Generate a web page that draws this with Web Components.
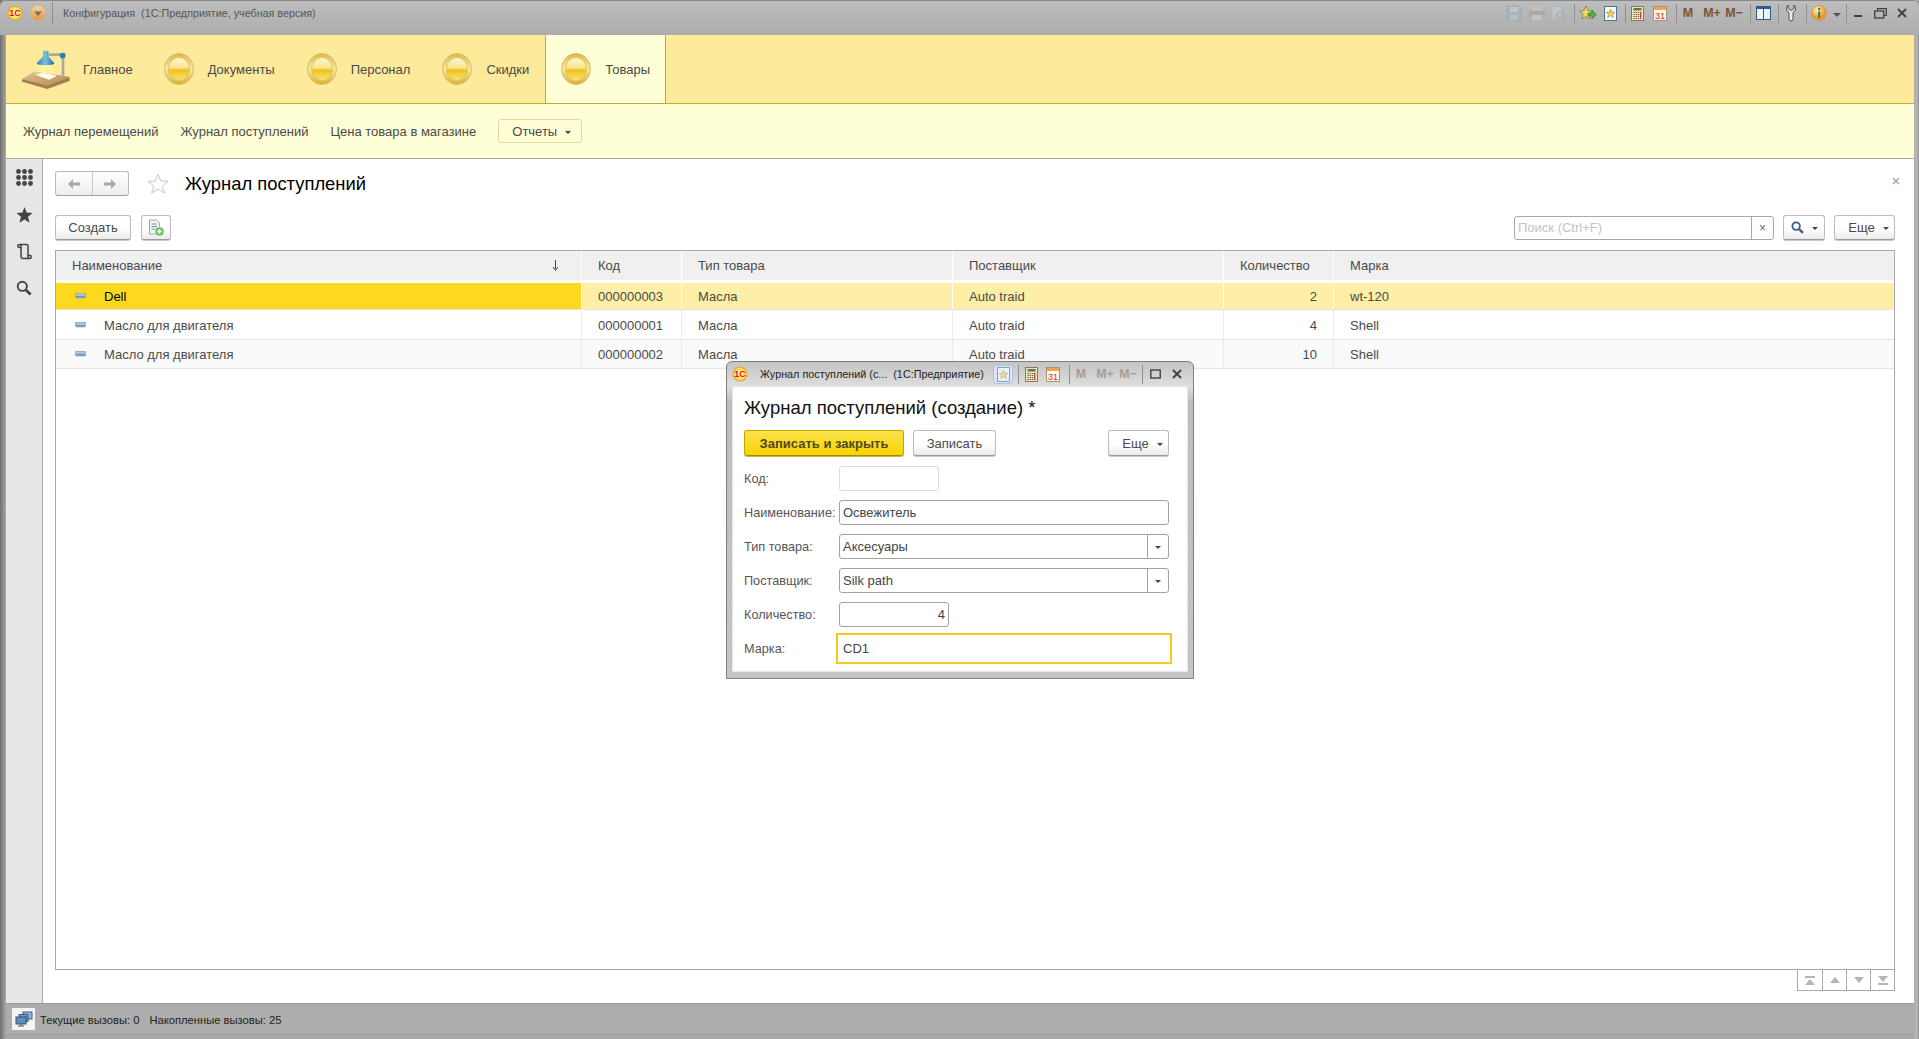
<!DOCTYPE html>
<html lang="ru">
<head>
<meta charset="utf-8">
<title>Журнал поступлений</title>
<style>
  html, body { margin: 0; height: 100%; overflow: hidden; }
  body { font-family: "Liberation Sans", Arial, sans-serif; font-size: 13px; color: #4a4a4a; }
</style>
</head>
<body>
<ic-app>
  <ic-titlebar>Конфигурация&nbsp; (1С:Предприятие, учебная версия)</ic-titlebar>
  <ic-sections>
    <ic-section icon="lamp" style="padding:0 15px 0 14px;gap:10px">Главное</ic-section>
    <ic-section icon="ball">Документы</ic-section>
    <ic-section icon="ball">Персонал</ic-section>
    <ic-section icon="ball">Скидки</ic-section>
    <ic-section icon="ball" active>Товары</ic-section>
  </ic-sections>
  <ic-subnav>
    <span>Журнал перемещений</span>
    <span>Журнал поступлений</span>
    <span>Цена товара в магазине</span>
    <ic-button tone="soft" menu style="width:84px">Отчеты</ic-button>
  </ic-subnav>
  <ic-workspace>
    <ic-sidebar></ic-sidebar>
    <ic-journal></ic-journal>
  </ic-workspace>
  <ic-status></ic-status>
  <ic-dialog></ic-dialog>
</ic-app>

<script>
// small drawings, coordinates follow the 3x crops of the reference
const ICONS = {
  lamp: `<svg width="53" height="43" viewBox="60 140 160 130">
    <defs>
      <linearGradient id="b" x1="0" x2="1" y1="0" y2="1"><stop offset="0" stop-color="#e2bd8c"/><stop offset="1" stop-color="#b58a5c"/></linearGradient>
      <linearGradient id="l" x1="0" x2="0" y1="0" y2="1"><stop offset="0" stop-color="#fff6a0"/><stop offset="1" stop-color="#fff6a0" stop-opacity=".2"/></linearGradient>
      <linearGradient id="s" x1="0" x2="1" y1="0" y2="0"><stop offset="0" stop-color="#2f80b0"/><stop offset=".5" stop-color="#7cc0de"/><stop offset="1" stop-color="#1f6a9c"/></linearGradient>
    </defs>
    <path d="M66 236 105 212 210 228 210 240 142 264 66 242Z" fill="#a87c52"/>
    <path d="M66 234 105 212 210 228 142 254Z" fill="url(#b)"/>
    <path d="M108 222 128 214 172 224 148 236Z" fill="#fffdf0"/>
    <path d="M122 188 152 188 170 222 100 222Z" fill="url(#l)"/>
    <path d="M146 160H190V224" fill="none" stroke="#a9a9a0" stroke-width="8"/>
    <path d="M130 148H146V166L164 186Q164 192 137 192 110 192 110 186L130 166Z" fill="url(#s)"/>
    <circle cx="189" cy="163" r="9" fill="#2f80b0"/>
  </svg>`,
  ball: `<svg width="30" height="32" viewBox="0 0 30 32">
    <defs>
      <linearGradient id="o" x1="0" x2="0" y1="0" y2="1"><stop offset="0" stop-color="#dcb84a"/><stop offset=".5" stop-color="#f8e7a8"/><stop offset="1" stop-color="#d9b035"/></linearGradient>
      <linearGradient id="i" x1="0" x2="0" y1="0" y2="1"><stop offset="0" stop-color="#fdf8d8"/><stop offset=".45" stop-color="#f8e590"/><stop offset=".55" stop-color="#efc21a"/><stop offset="1" stop-color="#f9e47e"/></linearGradient>
    </defs>
    <ellipse cx="15" cy="16" rx="14.5" ry="15.5" fill="url(#o)" stroke="#d8bd66"/>
    <ellipse cx="15" cy="16" rx="10.5" ry="11.5" fill="url(#i)" stroke="#e3c145" stroke-width=".8"/>
  </svg>`,
  logo: `<svg width="16" height="16" viewBox="0 0 16 16">
    <defs><radialGradient id="g"><stop offset="0" stop-color="#fff9c8"/><stop offset=".75" stop-color="#fcdc50"/><stop offset="1" stop-color="#e98f25"/></radialGradient></defs>
    <circle cx="8" cy="8" r="7.5" fill="url(#g)"/>
    <text x="8" y="11.2" text-anchor="middle" font-family="Liberation Sans" font-weight="700" font-size="9" fill="#d8191c">1С</text>
  </svg>`,
  down: `<svg width="16" height="16" viewBox="0 0 16 16">
    <defs><linearGradient id="g" x1="0" x2="0" y1="0" y2="1"><stop offset="0" stop-color="#f5d6a6"/><stop offset="1" stop-color="#e6943c"/></linearGradient></defs>
    <circle cx="8" cy="8" r="7.5" fill="url(#g)" stroke="#e0b27a" stroke-width=".5"/>
    <path d="M4 6.5H12L8 11Z" fill="#6f6f6f"/>
  </svg>`,
  save: `<svg width="16" height="16" viewBox="0 0 16 16"><path d="M1 1H13L15 3V15H1Z" fill="#9fb3c0" stroke="#8ea6b6"/><rect x="4" y="2" width="8" height="5" fill="#c7d3da"/><rect x="4" y="10" width="8" height="5" fill="#b9c7d0"/></svg>`,
  print: `<svg width="18" height="16" viewBox="0 0 18 16"><rect x="4" y="1" width="10" height="5" fill="#c9c3bd"/><rect x="1" y="6" width="16" height="6" rx="1" fill="#a89f99"/><rect x="4" y="10" width="10" height="5" fill="#d0cbc6"/></svg>`,
  preview: `<svg width="16" height="16" viewBox="0 0 16 16"><path d="M2 1H10L12 3V14H2Z" fill="#c3cdd4" stroke="#a7b4bc"/><circle cx="10" cy="10" r="3" fill="#c5ccd0" stroke="#a09a94" stroke-width="1.2"/><path d="M12 12 15 15" stroke="#b89c88" stroke-width="1.5"/></svg>`,
  stargo: `<svg width="18" height="16" viewBox="0 0 18 16"><path d="M7 1 9 5.5 13.5 6 10 9 11 14 7 11.5 3 14 4 9 .5 6 5 5.5Z" fill="#f5d768" stroke="#6f6a3a" stroke-width=".7"/><path d="M9 8H13V5L17.5 9.5 13 14V11H9Z" fill="#55b03c" stroke="#2e7a25" stroke-width=".6"/></svg>`,
  stardoc: `<svg width="13" height="15" viewBox="0 0 13 15"><rect x=".5" y=".5" width="12" height="14" fill="#f6f8fc" stroke="#4e6f98"/><path d="M6.5 3 7.8 6 11 6.3 8.6 8.3 9.3 11.5 6.5 9.8 3.7 11.5 4.4 8.3 2 6.3 5.2 6Z" fill="#f0cf5c" stroke="#8a7a3a" stroke-width=".5"/></svg>`,
  calc: `<svg width="13" height="15" viewBox="0 0 13 15"><rect x=".5" y=".5" width="12" height="14" fill="#f5e2b6" stroke="#8d7850"/><rect x="2.5" y="2" width="8" height="2.5" fill="#58795a"/><path d="M2.5 6.5H10.5M2.5 8.5H10.5M2.5 10.5H10.5M2.5 12.5H10.5" stroke="#5e5a4e" stroke-dasharray="1.3 .9"/><path d="M9.5 6V13" stroke="#c9402e"/></svg>`,
  cal: `<svg width="14" height="15" viewBox="0 0 14 15"><rect x=".5" y=".5" width="13" height="14" fill="#fdf7ea" stroke="#a89470"/><rect x="1" y="1" width="12" height="3" fill="#eda45a"/><text x="7" y="13" text-anchor="middle" font-family="Liberation Sans" font-size="9" fill="#dd2b1c">31</text></svg>`,
  panel: `<svg width="15" height="14" viewBox="0 0 15 14"><rect x=".5" y=".5" width="14" height="13" fill="#eef3f8" stroke="#2f5c86"/><rect x="1" y="1" width="13" height="2" fill="#2f5c86"/><path d="M7.5 3V13" stroke="#2f5c86"/></svg>`,
  wrench: `<svg width="10" height="18" viewBox="0 0 10 18"><path d="M2 1V4.5L5 6.5 8 4.5V1Q9.5 3 9.5 5 9.5 7.5 7 8.5V14.5Q7 17 5 17T3 14.5V8.5Q.5 7.5 .5 5 .5 3 2 1Z" fill="#e8e8e8" stroke="#4f4f4f"/></svg>`,
  info: `<svg width="16" height="16" viewBox="0 0 16 16"><defs><radialGradient id="g" cx=".4" cy=".3"><stop offset="0" stop-color="#fff2c6"/><stop offset="1" stop-color="#eb9a31"/></radialGradient></defs><circle cx="8" cy="8" r="7.5" fill="url(#g)" stroke="#c98b3c" stroke-width=".6"/><rect x="7" y="6.5" width="2.2" height="6.5" fill="#3c8a2e"/><rect x="7" y="3" width="2.2" height="2.2" fill="#3c8a2e"/></svg>`,
  min: `<svg width="10" height="10" viewBox="0 0 10 10"><path d="M1 8H9" stroke="#3f3f3f" stroke-width="2"/></svg>`,
  restore: `<svg width="13" height="11" viewBox="0 0 13 11"><path d="M3.5 2.5V.7H12.3V7.5H10" fill="none" stroke="#3f3f3f" stroke-width="1.2"/><rect x=".7" y="3" width="9" height="7" fill="none" stroke="#3f3f3f" stroke-width="1.3"/></svg>`,
  max: `<svg width="11" height="10" viewBox="0 0 11 10"><rect x=".8" y="1" width="9.4" height="8" fill="none" stroke="#3f3f3f" stroke-width="1.4"/></svg>`,
  close: `<svg width="10" height="10" viewBox="0 0 10 10"><path d="M1 1 9 9M9 1 1 9" stroke="#444" stroke-width="2"/></svg>`,
  closethin: `<svg width="8" height="8" viewBox="0 0 8 8"><path d="M1 1 7 7M7 1 1 7" stroke="#a8a8a8" stroke-width="1.5"/></svg>`,
  grid: `<svg width="17" height="17" viewBox="0 0 17 17" fill="#444"><circle cx="2.5" cy="2.5" r="2.4"/><circle cx="8.5" cy="2.5" r="2.4"/><circle cx="14.5" cy="2.5" r="2.4"/><circle cx="2.5" cy="8.5" r="2.4"/><circle cx="8.5" cy="8.5" r="2.4"/><circle cx="14.5" cy="8.5" r="2.4"/><circle cx="2.5" cy="14.5" r="2.4"/><circle cx="8.5" cy="14.5" r="2.4"/><circle cx="14.5" cy="14.5" r="2.4"/></svg>`,
  star: `<svg width="17" height="16" viewBox="0 0 17 16"><path d="M8.5 0 10.6 5.6 16.7 6 12 9.8 13.6 15.8 8.5 12.5 3.4 15.8 5 9.8 .3 6 6.4 5.6Z" fill="#444"/></svg>`,
  scroll: `<svg width="15" height="17" viewBox="0 0 15 17" fill="none" stroke="#444" stroke-width="1.5"><path d="M3 1.5H9.5Q11 1.5 11 3V13.5Q11 15.5 13 15.5H6Q4 15.5 4 13.5V3.5Q4 1.5 2 1.5 .8 1.5 .8 3 .8 4.5 2.5 4.5H4"/><path d="M11 12.5H13.5Q14.2 12.5 14.2 14 14.2 15.5 13 15.5"/></svg>`,
  lens: `<svg width="16" height="16" viewBox="0 0 16 16" fill="none" stroke="#444"><circle cx="6.3" cy="6.3" r="4.6" stroke-width="1.9"/><path d="M10 10 14.6 14.6" stroke-width="2.8"/></svg>`,
  lensblue: `<svg width="13" height="13" viewBox="0 0 16 16" fill="none" stroke="#3b5f86"><circle cx="6.3" cy="6.3" r="4.6" stroke-width="2.2"/><path d="M10 10 14.6 14.6" stroke-width="3"/></svg>`,
  back: `<svg width="14" height="12" viewBox="0 0 14 12"><path d="M6 1 1 6 6 11V7.5H13V4.5H6Z" fill="#a8a8a8"/></svg>`,
  fwd: `<svg width="14" height="12" viewBox="0 0 14 12"><path d="M8 1 13 6 8 11V7.5H1V4.5H8Z" fill="#a8a8a8"/></svg>`,
  starline: `<svg width="22" height="21" viewBox="0 0 22 21"><path d="M11 1 13.8 8 21 8.3 15.4 13 17.3 20 11 16 4.7 20 6.6 13 1 8.3 8.2 8Z" fill="#fff" stroke="#c8c8c8"/></svg>`,
  newdoc: `<svg width="17" height="18" viewBox="0 0 17 18"><path d="M1.5 1H8.5L11.5 4V15H1.5Z" fill="#f4f7fa" stroke="#9aa7b0"/><path d="M3.5 5H9M3.5 7.5H9M3.5 10H7" stroke="#6f90ad"/><circle cx="11.5" cy="12.5" r="4.5" fill="#6cb85c" stroke="#cfe6c8"/><path d="M9 12.5H14M11.5 10V15" stroke="#fff" stroke-width="1.6"/></svg>`,
  dash: `<svg width="11" height="6" viewBox="0 0 11 6"><rect width="11" height="5" rx="2" fill="#a9c4dc" stroke="#6f8ba6" stroke-width=".6"/><rect x="1" y="3" width="9" height="1.5" fill="#7a97b2"/></svg>`,
  sort: `<svg width="7" height="11" viewBox="0 0 7 11"><path d="M3.5 0V9M1 7 3.5 10.5 6 7" fill="none" stroke="#444"/></svg>`,
  net: `<svg width="18" height="16" viewBox="0 0 18 16"><rect x="8" y="1" width="9" height="7" fill="#8fb6d8" stroke="#3c5f80"/><rect x="4" y="3.5" width="9" height="7" fill="#6f9cc4" stroke="#3c5f80"/><rect x="1" y="6" width="10" height="7" fill="#5c90bf" stroke="#2f4f6e"/><path d="M6 13V15M3 15H9" stroke="#555"/></svg>`
};

// renders one of the drawings above; opacity through the "dim" attribute
class IcIcon extends HTMLElement {
  connectedCallback() {
    this.attachShadow({ mode: 'open' });
    this.shadowRoot.innerHTML = `
      <style>
        :host { display: inline-flex; align-items: center; justify-content: center; line-height: 0; }
        :host([dim]) { opacity: .6; }
      </style>
      ${ICONS[this.getAttribute('name')] || ''}`;
  }
}
customElements.define('ic-icon', IcIcon);

class IcApp extends HTMLElement {
  connectedCallback() {
    this.attachShadow({ mode: 'open' });
    this.shadowRoot.innerHTML = `
      <style>
        :host {
          display: flex;
          flex-direction: column;
          position: relative;
          box-sizing: border-box;
          height: 1039px;
          padding: 0 5px 4px 6px;
          background: linear-gradient(90deg, #6f6f6f 0, #8c8c8c 3px, #a8a8a8 6px, #a8a8a8 calc(100% - 6px), #b9b9b9 calc(100% - 2px), #8d8d8d 100%);
        }
      </style>
      <slot></slot>`;
  }
}
customElements.define('ic-app', IcApp);

// [width, name, dimmed] or [sep, left gap, right gap]
const TOOLS = [
  [23, 'save', 1], [24, 'print', 1], [18, 'preview', 1], ['sep', 7, 2],
  [22, 'stargo'], [22, 'stardoc'], ['sep', 4, 0],
  [22, 'calc'], [24, 'cal'], ['sep', 4, 0],
  [22, 'M'], [26, 'M+'], [18, 'M-'], ['sep', 7, 0],
  [24, 'panel'], ['sep', 3, 0],
  [24, 'wrench'], ['sep', 3, 0],
  [24, 'info'], [12, 'caret'], ['sep', 3, 0],
  [22, 'min'], [22, 'restore'], [22, 'close']
];

function toolHtml(list) {
  return list.map(t => {
    if (t[0] === 'sep') return `<i class="sep" style="margin:0 ${t[2]}px 0 ${t[1]}px"></i>`;
    const [w, name, dim] = t;
    let inner;
    if (name[0] === 'M') inner = `<b class="${dim ? 'faded' : ''}">${name.replace('-', '−')}</b>`;
    else if (name === 'caret') inner = '<u class="caret"></u>';
    else inner = `<ic-icon name="${name}" ${dim ? 'dim' : ''}></ic-icon>`;
    return `<span class="tool" style="width:${w}px">${inner}</span>`;
  }).join('');
}

const TOOL_CSS = `
  .tool { display: flex; align-items: center; justify-content: center; flex: none; }
  .tool b { font: 700 12.5px "Liberation Sans", Arial, sans-serif; color: #7b5433; white-space: nowrap; }
  .tool b.faded { color: #a99c92; }
  .sep { display: block; flex: none; width: 1px; height: 19px; background: #8f8f8f; }
  .caret { width: 0; height: 0; border: 4px solid transparent; border-top-color: #555; border-bottom: 0; margin-top: 4px; }
`;

class IcTitlebar extends HTMLElement {
  connectedCallback() {
    this.attachShadow({ mode: 'open' });
    this.shadowRoot.innerHTML = `
      <style>
        :host {
          display: flex;
          align-items: flex-start;
          height: 35px;
          margin: 0 -5px 0 -6px;
          padding: 4px 5px 0 7px;
          box-sizing: border-box;
          background: linear-gradient(#bdbdbd, #acacac);
          border-top: 1px solid #8a8a8a;
          border-radius: 6px 6px 0 0;
          font-size: 10.75px;
          color: #555;
        }
        .left { display: flex; align-items: center; height: 16px; }
        .vline { width: 1px; height: 22px; margin: 0 10px 0 6px; background: #8f8f8f; }
        .name { white-space: nowrap; }
        .tools { display: flex; align-items: center; margin-left: auto; height: 16px; margin-right: 1px; }
        ${TOOL_CSS}
      </style>
      <div class="left">
        <ic-icon name="logo"></ic-icon>
        <ic-icon name="down" style="margin-left:7px"></ic-icon>
        <i class="vline"></i>
        <span class="name"><slot></slot></span>
      </div>
      <div class="tools">${toolHtml(TOOLS)}</div>`;
  }
}
customElements.define('ic-titlebar', IcTitlebar);

class IcSections extends HTMLElement {
  connectedCallback() {
    this.attachShadow({ mode: 'open' });
    this.shadowRoot.innerHTML = `
      <style>
        :host {
          display: flex;
          height: 69px;
          box-sizing: border-box;
          background: #fdeb9b;
          border-bottom: 1px solid #c4ab2e;
        }
      </style>
      <slot></slot>`;
  }
}
customElements.define('ic-sections', IcSections);

class IcSection extends HTMLElement {
  connectedCallback() {
    this.attachShadow({ mode: 'open' });
    const icon = this.getAttribute('icon');
    this.shadowRoot.innerHTML = `
      <style>
        :host {
          display: flex;
          align-items: center;
          gap: 14px;
          padding: 0 16px;
          white-space: nowrap;
          color: #4a4a4a;
        }
        :host([active]) {
          background: #feffd6;
          padding: 0 15px;
          border-left: 1px solid #c4ab2e;
          border-right: 1px solid #c4ab2e;
        }
      </style>
      <ic-icon name="${icon}"></ic-icon>
      <slot></slot>`;
  }
}
customElements.define('ic-section', IcSection);

class IcSubnav extends HTMLElement {
  connectedCallback() {
    this.attachShadow({ mode: 'open' });
    this.shadowRoot.innerHTML = `
      <style>
        :host {
          display: flex;
          align-items: center;
          gap: 22px;
          height: 55px;
          padding: 0 17px;
          box-sizing: border-box;
          background: #feffd6;
          border-bottom: 1px solid #a9a9a9;
          white-space: nowrap;
          color: #4a4a4a;
        }
      </style>
      <slot></slot>`;
  }
}
customElements.define('ic-subnav', IcSubnav);

class IcButton extends HTMLElement {
  connectedCallback() {
    this.attachShadow({ mode: 'open' });
    const menu = this.hasAttribute('menu');
    this.shadowRoot.innerHTML = `
      <style>
        :host {
          display: inline-flex;
          align-items: center;
          justify-content: center;
          flex: none;
          box-sizing: border-box;
          height: 26px;
          gap: 8px;
          padding: 0 1px;
          border: 1px solid #bcbcbc;
          border-bottom-color: #9a9a9a;
          border-radius: 3px;
          background: linear-gradient(#fff 55%, #ececec);
          box-shadow: 0 1px 0 #c9c9c9;
          color: #4a4a4a;
          white-space: nowrap;
        }
        :host([menu]) { padding-left: 9px; }
        :host([tone="soft"]) {
          height: 24px;
          padding-left: 4px;
          background: transparent;
          border-color: #e2d99a;
          box-shadow: none;
        }
        :host([tone="primary"]) {
          background: linear-gradient(#fce24a, #f8d400);
          border-color: #c2a300;
          border-bottom-color: #a68b00;
          box-shadow: 0 1px 0 #c9b55a;
          font-weight: 700;
          color: #4f4a1c;
        }
        .caret { width: 0; height: 0; border: 3px solid transparent; border-top-color: #444; border-bottom: 0; margin-top: 2px; }
      </style>
      <slot></slot>${menu ? '<span class="caret"></span>' : ''}`;
  }
}
customElements.define('ic-button', IcButton);

class IcSidebar extends HTMLElement {
  connectedCallback() {
    this.attachShadow({ mode: 'open' });
    this.shadowRoot.innerHTML = `
      <style>
        :host {
          display: flex;
          flex-direction: column;
          flex: none;
          width: 37px;
          box-sizing: border-box;
          background: #e7e7e7;
          border-right: 1px solid #a9a9a9;
        }
        span { display: flex; align-items: center; justify-content: center; height: 37px; }
        span:last-child { height: 36px; }
      </style>
      <span><ic-icon name="grid"></ic-icon></span>
      <span><ic-icon name="star"></ic-icon></span>
      <span><ic-icon name="scroll"></ic-icon></span>
      <span><ic-icon name="lens"></ic-icon></span>`;
  }
}
customElements.define('ic-sidebar', IcSidebar);

class IcWorkspace extends HTMLElement {
  connectedCallback() {
    this.attachShadow({ mode: 'open' });
    this.shadowRoot.innerHTML = `
      <style>
        :host { display: flex; flex: 1; min-height: 0; background: #fff; }
      </style>
      <slot></slot>`;
  }
}
customElements.define('ic-workspace', IcWorkspace);

class IcJournal extends HTMLElement {
  connectedCallback() {
    this.attachShadow({ mode: 'open' });
    this.shadowRoot.innerHTML = `
      <style>
        :host {
          display: flex;
          flex-direction: column;
          flex: 1;
          min-width: 0;
          padding: 12px 19px 12px 12px;
          box-sizing: border-box;
        }
        .head { display: flex; align-items: center; height: 25px; }
        .nav {
          display: flex;
          width: 74px;
          height: 25px;
          box-sizing: border-box;
          border: 1px solid #bcbcbc;
          border-bottom-color: #a0a0a0;
          border-radius: 3px;
          background: linear-gradient(#fff, #eee);
        }
        .nav span { flex: 1; display: flex; align-items: center; justify-content: center; }
        .nav span + span { border-left: 1px solid #c8c8c8; }
        h1 { margin: 1px 0 0 16px; font: 400 18.4px "Liberation Sans", Arial, sans-serif; color: #000; white-space: nowrap; }
        .x { margin-left: auto; margin-top: -5px; margin-right: -5px; line-height: 0; }
        .bar { display: flex; align-items: center; height: 25px; margin: 19px 0 10px; }
        .search {
          display: flex;
          width: 260px;
          height: 24px;
          margin-left: auto;
          box-sizing: border-box;
          border: 1px solid #a8a8a8;
          border-radius: 3px;
          color: #c4c4c4;
          line-height: 22px;
          padding-left: 3px;
        }
        .search span:first-child { flex: 1; }
        .search span:last-child {
          width: 21px;
          border-left: 1px solid #a8a8a8;
          text-align: center;
          color: #666;
          font-size: 12px;
        }
      </style>
      <div class="head">
        <div class="nav"><span><ic-icon name="back"></ic-icon></span><span><ic-icon name="fwd"></ic-icon></span></div>
        <ic-icon name="starline" style="margin-left:18px"></ic-icon>
        <h1>Журнал поступлений</h1>
        <span class="x"><ic-icon name="closethin"></ic-icon></span>
      </div>
      <div class="bar">
        <ic-button style="width:76px;height:25px">Создать</ic-button>
        <ic-button style="width:30px;height:25px;margin-left:10px"><ic-icon name="newdoc"></ic-icon></ic-button>
        <div class="search"><span>Поиск (Ctrl+F)</span><span>×</span></div>
        <ic-button menu style="width:42px;height:25px;margin-left:9px;padding-left:1px"><ic-icon name="lensblue"></ic-icon></ic-button>
        <ic-button menu style="width:61px;height:25px;margin-left:9px">Еще</ic-button>
      </div>
      <ic-table></ic-table>`;
  }
}
customElements.define('ic-journal', IcJournal);

const COLUMNS = [
  ['Наименование', 526], ['Код', 100], ['Тип товара', 271], ['Поставщик', 271], ['Количество', 110], ['Марка', 0]
];
const ROWS = [
  ['Dell', '000000003', 'Масла', 'Auto traid', '2', 'wt-120'],
  ['Масло для двигателя', '000000001', 'Масла', 'Auto traid', '4', 'Shell'],
  ['Масло для двигателя', '000000002', 'Масла', 'Auto traid', '10', 'Shell']
];

class IcTable extends HTMLElement {
  connectedCallback() {
    this.attachShadow({ mode: 'open' });
    const tracks = COLUMNS.map(c => c[1] ? c[1] + 'px' : '1fr').join(' ');
    this.shadowRoot.innerHTML = `
      <style>
        :host { display: flex; flex-direction: column; flex: 1; min-height: 0; }
        .box { flex: 1; border: 1px solid #a9a9a9; box-sizing: border-box; color: #4a4a4a; }
        .row { display: grid; grid-template-columns: ${tracks}; height: 29px; box-sizing: border-box; border-bottom: 1px solid #e4e4e4; }
        .row > div { display: flex; align-items: center; padding: 0 16px; border-right: 1px solid #ececec; white-space: nowrap; }
        .row > div:last-child { border-right: 0; }
        .row .num { justify-content: flex-end; }
        .header { height: 29px; background: #f0f0f0; border-bottom: 0; margin-bottom: 3px; }
        .header > div { border-right: 1px solid #fff; }
        .header ic-icon { margin-left: auto; margin-right: 6px; }
        .row.sel { height: 27px; background: #fdf0a6; }
        .row.sel > div { border-right-color: #fff; }
        .row.sel > div:first-child { background: #fcd91f; color: #000; }
        .row.odd { background: #fafafa; }
        .row.mid { height: 30px; }
        .row.mid > div { padding-top: 1px; }
        .name ic-icon { margin-right: 18px; margin-left: 3px; }
        .pager { display: flex; align-self: flex-end; height: 21px; border: 1px solid #a9a9a9; border-top: 0; box-sizing: border-box; }
        .pager span { display: flex; align-items: center; justify-content: center; width: 24px; box-sizing: border-box; }
        .pager span + span { border-left: 1px solid #a9a9a9; }
        .tri { width: 0; height: 0; border-left: 5px solid transparent; border-right: 5px solid transparent; }
        .up { border-bottom: 6px solid #b5b5b5; }
        .dn { border-top: 6px solid #b5b5b5; }
        .stack { display: flex; flex-direction: column; align-items: center; gap: 1px; }
        .stack i { display: block; width: 10px; height: 2px; background: #b5b5b5; }
      </style>
      <div class="box">
        <div class="row header">
          ${COLUMNS.map((c, i) => `<div>${c[0]}${i === 0 ? '<ic-icon name="sort"></ic-icon>' : ''}</div>`).join('')}
        </div>
        ${ROWS.map((r, n) => `
          <div class="row ${n === 0 ? 'sel' : n === 1 ? 'mid' : 'odd'}">
            ${r.map((v, i) => i === 0
              ? `<div class="name"><ic-icon name="dash"></ic-icon>${v}</div>`
              : `<div class="${i === 4 ? 'num' : ''}">${v}</div>`).join('')}
          </div>`).join('')}
      </div>
      <div class="pager">
        <span><div class="stack"><i></i><div class="tri up"></div></div></span>
        <span><div class="tri up"></div></span>
        <span><div class="tri dn"></div></span>
        <span><div class="stack"><div class="tri dn"></div><i></i></div></span>
      </div>`;
  }
}
customElements.define('ic-table', IcTable);

class IcStatus extends HTMLElement {
  connectedCallback() {
    this.attachShadow({ mode: 'open' });
    this.shadowRoot.innerHTML = `
      <style>
        :host {
          display: flex;
          align-items: center;
          height: 32px;
          flex: none;
          padding-left: 6px;
          box-sizing: border-box;
          background: #adadad;
          border-top: 1px solid #9a9a9a;
          border-bottom: 1px solid #9f9f9f;
          color: #222;
          font-size: 11.2px;
          white-space: nowrap;
        }
        .net { display: flex; align-items: center; justify-content: center; width: 23px; height: 22px; background: #f4f4f4; margin-right: 5px; }
        .txt { padding-top: 2px; }
      </style>
      <span class="net"><ic-icon name="net"></ic-icon></span>
      <span class="txt">Текущие вызовы: 0</span>
      <span class="txt" style="margin-left:10px">Накопленные вызовы: 25</span>`;
  }
}
customElements.define('ic-status', IcStatus);

class IcField extends HTMLElement {
  connectedCallback() {
    this.attachShadow({ mode: 'open' });
    const combo = this.hasAttribute('combo');
    this.shadowRoot.innerHTML = `
      <style>
        :host {
          display: flex;
          box-sizing: border-box;
          height: 25px;
          border: 1px solid #a3a3a3;
          border-radius: 3px;
          background: #fff;
          line-height: 23px;
          color: #444;
        }
        :host([disabled]) { border-color: #dcdcdc; }
        :host([focused]) { border-color: transparent; border-radius: 0; outline: 2px solid #f7c81e; outline-offset: 1px; }
        :host([right]) .val { text-align: right; }
        .val { flex: 1; padding: 0 3px; }
        .btn { display: flex; align-items: center; justify-content: center; width: 20px; border-left: 1px solid #a3a3a3; }
        .caret { width: 0; height: 0; border: 3px solid transparent; border-top-color: #444; border-bottom: 0; margin-top: 2px; }
      </style>
      <div class="val"><slot></slot></div>
      ${combo ? '<div class="btn"><span class="caret"></span></div>' : ''}`;
  }
}
customElements.define('ic-field', IcField);

const DIALOG_TOOLS = [
  ['sep', 5, 0], [24, 'calc'], [20, 'cal'], ['sep', 6, 0],
  [22, 'M', 1], [26, 'M+', 1], [20, 'M-', 1], ['sep', 4, 0],
  [24, 'max'], [20, 'close']
];

class IcDialog extends HTMLElement {
  connectedCallback() {
    this.attachShadow({ mode: 'open' });
    this.shadowRoot.innerHTML = `
      <style>
        :host {
          position: absolute;
          left: 726px;
          top: 361px;
          width: 468px;
          height: 318px;
          box-sizing: border-box;
          display: flex;
          flex-direction: column;
          padding: 0 5px 6px;
          background: linear-gradient(#c4c4c4, #dedede 24px, #bdbdbd 40px, #c4c4c4);
          border: 1px solid #7f7f7f;
          border-radius: 6px 6px 0 0;
        }
        .title { display: flex; align-items: center; height: 24px; flex: none; font-size: 10.8px; color: #222; white-space: nowrap; }
        .cap { width: 223px; margin-left: 12px; flex: none; }
        .fav {
          display: flex; align-items: center; justify-content: center;
          width: 20px; height: 19px; margin-left: 10px; box-sizing: border-box; flex: none;
          border: 1px solid #a8c4e4; border-radius: 3px; background: #dfe8f2;
        }
        .fav ic-icon { opacity: .6; }
        ${TOOL_CSS}
        .body {
          flex: 1;
          background: #fff;
          padding: 10px 19px 0 12px;
          box-shadow: inset 0 0 2px #aaa;
        }
        h2 { margin: 0; height: 24px; font: 400 18.5px/24px "Liberation Sans", Arial, sans-serif; color: #111; white-space: nowrap; }
        .actions { display: flex; gap: 9px; margin: 10px 0; }
        .form { display: grid; grid-template-columns: 95px 1fr; grid-auto-rows: 25px; row-gap: 9px; align-items: center; color: #555; white-space: nowrap; }
        .form > span { font-size: 12.7px; }
      </style>
      <div class="title">
        <ic-icon name="logo"></ic-icon>
        <span class="cap">Журнал поступлений (с...&nbsp; (1С:Предприятие)</span>
        <span class="fav"><ic-icon name="stardoc"></ic-icon></span>
        ${toolHtml(DIALOG_TOOLS)}
      </div>
      <div class="body">
        <h2>Журнал поступлений (создание) *</h2>
        <div class="actions">
          <ic-button tone="primary" style="width:160px;padding-left:1px">Записать и закрыть</ic-button>
          <ic-button style="width:83px">Записать</ic-button>
          <ic-button menu style="width:61px;margin-left:auto">Еще</ic-button>
        </div>
        <div class="form">
          <span>Код:</span><ic-field disabled style="width:100px"></ic-field>
          <span>Наименование:</span><ic-field>Освежитель</ic-field>
          <span>Тип товара:</span><ic-field combo>Аксесуары</ic-field>
          <span>Поставщик:</span><ic-field combo>Silk path</ic-field>
          <span>Количество:</span><ic-field right style="width:110px">4</ic-field>
          <span>Марка:</span><ic-field focused>CD1</ic-field>
        </div>
      </div>`;
  }
}
customElements.define('ic-dialog', IcDialog);
</script>
</body>
</html>
